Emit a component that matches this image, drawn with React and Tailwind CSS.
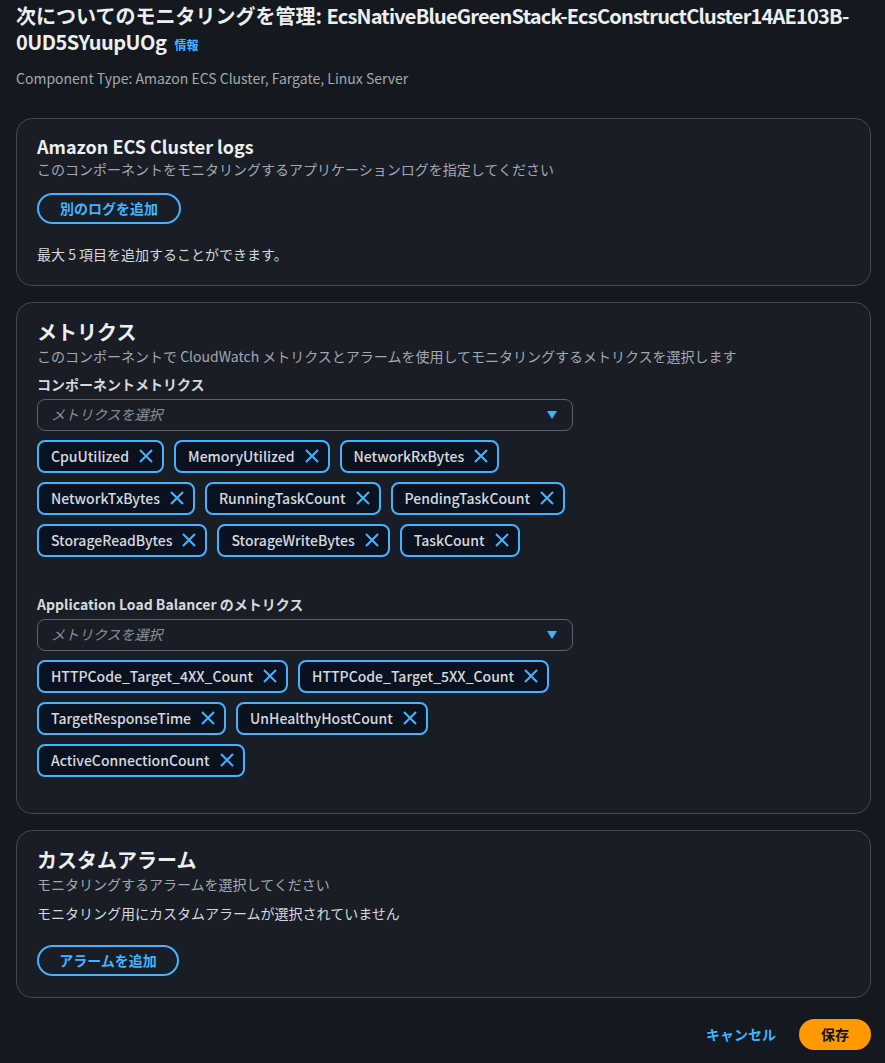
const font = { fontFamily: '"Noto Sans CJK JP", "Noto Sans", sans-serif' }

const componentMetrics = [
    ['CpuUtilized', 'MemoryUtilized', 'NetworkRxBytes'],
    ['NetworkTxBytes', 'RunningTaskCount', 'PendingTaskCount'],
    ['StorageReadBytes', 'StorageWriteBytes', 'TaskCount'],
]

const albMetrics = [
    ['HTTPCode_Target_4XX_Count', 'HTTPCode_Target_5XX_Count'],
    ['TargetResponseTime', 'UnHealthyHostCount'],
    ['ActiveConnectionCount'],
]

function Token({ label }) {
    return (
        <div className="h-[33px] flex items-center gap-[10px] pl-[12px] pr-[9px] rounded-lg border-2 border-[#42b4ff] bg-[#0a1220] text-[14px] text-[#d5d9de] font-medium">
            <span>{label}</span>
            <svg width="14" height="14" viewBox="0 0 14 14" fill="none">
                <path d="M1 1 L13 13 M13 1 L1 13" stroke="#42b4ff" strokeWidth="2" />
            </svg>
        </div>
    )
}

function MetricSelect({ label, rows }) {
    return (
        <div>
            <p className="text-[14px] font-bold text-[#d5d9de] leading-[20px]">{label}</p>
            <div className="mt-[5px] w-[536px] h-[32px] rounded-lg border border-[#5a606b] flex items-center justify-between pl-[13px] pr-[14px]">
                <span className="text-[14px] italic text-[#8b919b]">メトリクスを選択</span>
                <svg width="12" height="10" viewBox="0 0 12 10">
                    <path d="M1 1 L11 1 L6 9 Z" fill="#42b4ff" />
                </svg>
            </div>
            <div className="mt-[9px] space-y-[9px]">
                {rows.map((row, i) => (
                    <div key={i} className="flex gap-[10px]">
                        {row.map(m => <Token key={m} label={m} />)}
                    </div>
                ))}
            </div>
        </div>
    )
}

function Card({ children, className }) {
    return (
        <div className={'rounded-[16px] border border-[#434852] bg-[#191d25] px-5 ' + (className || '')}>
            {children}
        </div>
    )
}

function PillButton({ children, className }) {
    return (
        <button className={'h-[31px] rounded-full border-2 border-[#42b4ff] text-[#42b4ff] text-[14px] font-bold ' + (className || '')}>
            {children}
        </button>
    )
}

export default function App() {
    return (
        <div style={font} className="min-h-[1063px] bg-[#141920] pl-4 pr-[14px] pt-[3px] pb-[14px] text-[#e6e8eb]">
            <h1 className="text-[20px] font-bold leading-[26px] text-[#eceef0]">
                次についてのモニタリングを管理: <span className="whitespace-nowrap tracking-[-0.8px]">EcsNativeBlueGreenStack-EcsConstructCluster14AE103B-</span>
                <br />
                <span className="tracking-[-0.5px]">0UD5SYuupUOg</span>
                <span className="ml-[8px] text-[12px] font-bold text-[#42b4ff] align-middle">情報</span>
            </h1>
            <p className="mt-[10px] text-[14px] leading-[20px] text-[#a3a8b0]">Component Type: Amazon ECS Cluster, Fargate, Linux Server</p>

            <div className="mt-[30px] space-y-[16px]">
                <Card className="pt-[14px] pb-[21px]">
                    <h2 className="text-[18px] font-bold leading-[26px] text-[#eceef0]">Amazon ECS Cluster logs</h2>
                    <p className="text-[14px] text-[#a3a8b0] leading-[20px]">このコンポーネントをモニタリングするアプリケーションログを指定してください</p>
                    <PillButton className="mt-[14px] w-[144px]">別のログを追加</PillButton>
                    <p className="mt-[20px] text-[14px] leading-[20px] text-[#d5d9de]">最大 5 項目を追加することができます。</p>
                </Card>

                <Card className="pt-[15px] pb-[36px]">
                    <h2 className="text-[20px] font-bold leading-[28px] text-[#eceef0]">メトリクス</h2>
                    <p className="text-[14px] text-[#a3a8b0] leading-[20px]">このコンポーネントで CloudWatch メトリクスとアラームを使用してモニタリングするメトリクスを選択します</p>
                    <div className="mt-[8px]">
                        <MetricSelect label="コンポーネントメトリクス" rows={componentMetrics} />
                    </div>
                    <div className="mt-[37px]">
                        <MetricSelect label="Application Load Balancer のメトリクス" rows={albMetrics} />
                    </div>
                </Card>

                <Card className="pt-[15px] pb-[21px]">
                    <h2 className="text-[20px] font-bold leading-[28px] text-[#eceef0]">カスタムアラーム</h2>
                    <p className="text-[14px] text-[#a3a8b0] leading-[20px]">モニタリングするアラームを選択してください</p>
                    <p className="mt-[9px] text-[14px] leading-[20px] text-[#d5d9de]">モニタリング用にカスタムアラームが選択されていません</p>
                    <PillButton className="mt-[22px] w-[142px]">アラームを追加</PillButton>
                </Card>
            </div>

            <div className="mt-[21px] flex justify-end items-center gap-[23px]">
                <button className="text-[14px] font-bold text-[#42b4ff]">キャンセル</button>
                <button className="h-[31px] w-[72px] rounded-full bg-[#ff9900] text-[14px] font-bold text-[#0f141a]">保存</button>
            </div>
        </div>
    )
}
